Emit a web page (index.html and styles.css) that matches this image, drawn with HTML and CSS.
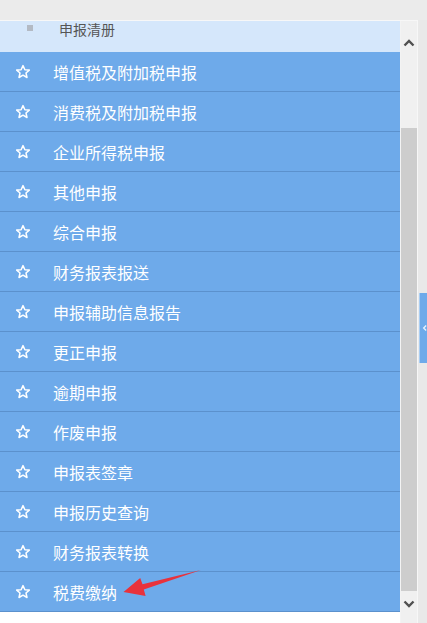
FILE: index.html
```html
<!DOCTYPE html>
<html lang="zh">
<head>
<meta charset="utf-8">
<title>申报菜单</title>
<link rel="stylesheet" href="styles.css">
</head>
<body>
<div class="topbar"></div>
<div class="main">
  <div class="frame">
    <div class="menu">
      <div class="sub"><span class="bullet"></span><span class="sub-text">申报清册</span></div>
      <ul class="list">
        <li class="item"><svg class="star" viewBox="0 0 16 16"><path d="M8 1.6 L9.9 5.7 L14.3 6.1 L11 9 L12 13.5 L8 11.2 L4 13.5 L5 9 L1.7 6.1 L6.1 5.7 Z"/></svg><span>增值税及附加税申报</span></li>
        <li class="item"><svg class="star" viewBox="0 0 16 16"><path d="M8 1.6 L9.9 5.7 L14.3 6.1 L11 9 L12 13.5 L8 11.2 L4 13.5 L5 9 L1.7 6.1 L6.1 5.7 Z"/></svg><span>消费税及附加税申报</span></li>
        <li class="item"><svg class="star" viewBox="0 0 16 16"><path d="M8 1.6 L9.9 5.7 L14.3 6.1 L11 9 L12 13.5 L8 11.2 L4 13.5 L5 9 L1.7 6.1 L6.1 5.7 Z"/></svg><span>企业所得税申报</span></li>
        <li class="item"><svg class="star" viewBox="0 0 16 16"><path d="M8 1.6 L9.9 5.7 L14.3 6.1 L11 9 L12 13.5 L8 11.2 L4 13.5 L5 9 L1.7 6.1 L6.1 5.7 Z"/></svg><span>其他申报</span></li>
        <li class="item"><svg class="star" viewBox="0 0 16 16"><path d="M8 1.6 L9.9 5.7 L14.3 6.1 L11 9 L12 13.5 L8 11.2 L4 13.5 L5 9 L1.7 6.1 L6.1 5.7 Z"/></svg><span>综合申报</span></li>
        <li class="item"><svg class="star" viewBox="0 0 16 16"><path d="M8 1.6 L9.9 5.7 L14.3 6.1 L11 9 L12 13.5 L8 11.2 L4 13.5 L5 9 L1.7 6.1 L6.1 5.7 Z"/></svg><span>财务报表报送</span></li>
        <li class="item"><svg class="star" viewBox="0 0 16 16"><path d="M8 1.6 L9.9 5.7 L14.3 6.1 L11 9 L12 13.5 L8 11.2 L4 13.5 L5 9 L1.7 6.1 L6.1 5.7 Z"/></svg><span>申报辅助信息报告</span></li>
        <li class="item"><svg class="star" viewBox="0 0 16 16"><path d="M8 1.6 L9.9 5.7 L14.3 6.1 L11 9 L12 13.5 L8 11.2 L4 13.5 L5 9 L1.7 6.1 L6.1 5.7 Z"/></svg><span>更正申报</span></li>
        <li class="item"><svg class="star" viewBox="0 0 16 16"><path d="M8 1.6 L9.9 5.7 L14.3 6.1 L11 9 L12 13.5 L8 11.2 L4 13.5 L5 9 L1.7 6.1 L6.1 5.7 Z"/></svg><span>逾期申报</span></li>
        <li class="item"><svg class="star" viewBox="0 0 16 16"><path d="M8 1.6 L9.9 5.7 L14.3 6.1 L11 9 L12 13.5 L8 11.2 L4 13.5 L5 9 L1.7 6.1 L6.1 5.7 Z"/></svg><span>作废申报</span></li>
        <li class="item"><svg class="star" viewBox="0 0 16 16"><path d="M8 1.6 L9.9 5.7 L14.3 6.1 L11 9 L12 13.5 L8 11.2 L4 13.5 L5 9 L1.7 6.1 L6.1 5.7 Z"/></svg><span>申报表签章</span></li>
        <li class="item"><svg class="star" viewBox="0 0 16 16"><path d="M8 1.6 L9.9 5.7 L14.3 6.1 L11 9 L12 13.5 L8 11.2 L4 13.5 L5 9 L1.7 6.1 L6.1 5.7 Z"/></svg><span>申报历史查询</span></li>
        <li class="item"><svg class="star" viewBox="0 0 16 16"><path d="M8 1.6 L9.9 5.7 L14.3 6.1 L11 9 L12 13.5 L8 11.2 L4 13.5 L5 9 L1.7 6.1 L6.1 5.7 Z"/></svg><span>财务报表转换</span></li>
        <li class="item"><svg class="star" viewBox="0 0 16 16"><path d="M8 1.6 L9.9 5.7 L14.3 6.1 L11 9 L12 13.5 L8 11.2 L4 13.5 L5 9 L1.7 6.1 L6.1 5.7 Z"/></svg><span>税费缴纳</span></li>
      </ul>
    </div>
    <div class="scrollbar">
      <div class="sb-up"><svg class="chev" viewBox="0 0 12 8"><path d="M1.5 6.5 L6 2 L10.5 6.5"/></svg></div>
      <div class="sb-track"><div class="sb-thumb"></div></div>
      <div class="sb-down"><svg class="chev" viewBox="0 0 12 8"><path d="M1.5 1.5 L6 6 L10.5 1.5"/></svg></div>
    </div>
  </div>
  <div class="side">
    <div class="tab"><svg class="tab-arrow" viewBox="0 0 6 8"><path d="M5 1 L2 4 L5 7"/></svg></div>
  </div>
</div>
<svg class="annot" viewBox="0 0 427 623" width="427" height="623">
  <polygon points="201,570 142.5,584.2 140.2,578 123.5,592 145.6,596 143.8,589.4" fill="#e8323c"/>
</svg>
</body>
</html>
```

FILE: styles.css
```css
html, body {
  margin: 0;
  padding: 0;
}

body {
  width: 427px;
  height: 623px;
  overflow: hidden;
  position: relative;
  background: #ebebeb;
  font-family: "Noto Sans CJK SC", "Microsoft YaHei", sans-serif;
}

.topbar {
  height: 20px;
  background: #ebebeb;
}

.main {
  display: flex;
  height: 603px;
}

.frame {
  display: flex;
  width: 417px;
  border-top: 1px solid #f7f7f7;
  border-right: 1px solid #f7f7f7;
  background: #ffffff;
}

.menu {
  width: 400px;
  background: #ffffff;
}

.sub {
  height: 31px;
  background: #d5e7fb;
  display: flex;
  align-items: flex-start;
}

.bullet {
  width: 6px;
  height: 6px;
  background: #b3bac4;
  margin: 4px 0 0 27px;
}

.sub-text {
  margin-left: 26px;
  font-size: 14px;
  line-height: 17px;
  color: #555555;
}

.list {
  list-style: none;
  margin: 0;
  padding: 0;
}

.item {
  height: 39px;
  border-bottom: 1px solid #5b91cd;
  background: #6eaaea;
  display: flex;
  align-items: center;
  color: #ffffff;
  font-size: 16px;
}

.star {
  width: 16px;
  height: 16px;
  margin-left: 15px;
  fill: none;
  stroke: #ffffff;
  stroke-width: 1.5;
  stroke-linejoin: round;
}

.item span {
  margin-left: 22px;
}

.scrollbar {
  width: 16px;
  border-left: 1px solid #f3f3f3;
  background: #f0f0f0;
  display: flex;
  flex-direction: column;
}

.sb-up {
  height: 44px;
  display: flex;
  justify-content: center;
  align-items: center;
}

.sb-track {
  flex: 1;
  padding-top: 63px;
  display: flex;
  flex-direction: column;
}

.sb-thumb {
  height: 463px;
  background: #cdcdcd;
}

.sb-down {
  height: 31px;
  display: flex;
  justify-content: center;
  align-items: flex-start;
  padding-top: 8px;
  box-sizing: border-box;
}

.chev {
  width: 12px;
  height: 8px;
  fill: none;
  stroke: #505050;
  stroke-width: 2.4;
}

.side {
  width: 9px;
  background: #e9e9e9;
}

.tab {
  width: 8px;
  height: 70px;
  margin: 273px 0 0 1px;
  background: #6eaaea;
  border-left: 1px solid #a8cdf3;
  box-sizing: border-box;
  display: flex;
  align-items: center;
  justify-content: flex-end;
}

.tab-arrow {
  width: 5px;
  height: 8px;
  fill: none;
  stroke: #e8f3ff;
  stroke-width: 1.6;
}

.annot {
  position: absolute;
  left: 0;
  top: 0;
  pointer-events: none;
}
```
